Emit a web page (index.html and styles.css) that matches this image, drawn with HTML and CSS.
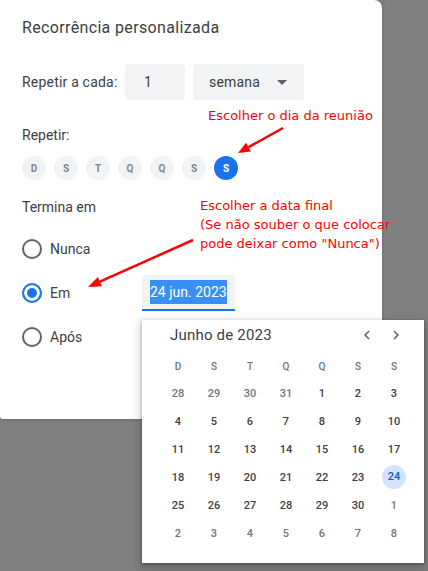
FILE: index.html
```html
<!DOCTYPE html>
<html lang="pt">

<head>
    <title>Recorrência personalizada</title>
    <link rel="stylesheet" href="styles.css">
</head>

<body>
    <div class="dialog">
        <h1 class="title">Recorrência personalizada</h1>

        <div class="repeat-row">
            <span class="label every">Repetir a cada:</span>
            <div class="field num">1</div>
            <div class="field select">semana <span class="caret"></span></div>
        </div>

        <p class="label repeat-label">Repetir:</p>
        <div class="days">
            <span class="day">D</span>
            <span class="day">S</span>
            <span class="day">T</span>
            <span class="day">Q</span>
            <span class="day">Q</span>
            <span class="day">S</span>
            <span class="day on">S</span>
        </div>

        <p class="label ends-label">Termina em</p>
        <div class="options">
            <div class="option">
                <span class="radio"></span>
                <span class="label">Nunca</span>
            </div>
            <div class="option">
                <span class="radio checked"></span>
                <span class="label">Em</span>
                <div class="date"><span class="sel">24 jun. 2023</span></div>
            </div>
            <div class="option">
                <span class="radio"></span>
                <span class="label">Após</span>
            </div>
        </div>
    </div>

    <!-- calendar popup over the dialog -->
    <div class="picker">
        <div class="picker-head">
            <span class="month">Junho de 2023</span>
            <span class="nav">
                <svg width="18" height="18" viewBox="0 0 24 24"><path d="M15.41 7.41L14 6l-6 6 6 6 1.41-1.41L10.83 12z" fill="#5f6368"/></svg>
            </span>
            <span class="nav">
                <svg width="18" height="18" viewBox="0 0 24 24"><path d="M8.59 16.59L10 18l6-6-6-6-1.41 1.41L13.17 12z" fill="#5f6368"/></svg>
            </span>
        </div>
        <div class="weekdays">
            <span>D</span><span>S</span><span>T</span><span>Q</span><span>Q</span><span>S</span><span>S</span>
        </div>
        <div class="dates">
            <span class="out">28</span><span class="out">29</span><span class="out">30</span><span class="out">31</span><span>1</span><span>2</span><span>3</span>
            <span>4</span><span>5</span><span>6</span><span>7</span><span>8</span><span>9</span><span>10</span>
            <span>11</span><span>12</span><span>13</span><span>14</span><span>15</span><span>16</span><span>17</span>
            <span>18</span><span>19</span><span>20</span><span>21</span><span>22</span><span>23</span><span class="picked"><b>24</b></span>
            <span>25</span><span>26</span><span>27</span><span>28</span><span>29</span><span>30</span><span class="out">1</span>
            <span class="out">2</span><span class="out">3</span><span class="out">4</span><span class="out">5</span><span class="out">6</span><span class="out">7</span><span class="out">8</span>
        </div>
    </div>

    <!-- red annotations -->
    <div class="note note-day">Escolher o dia da reunião</div>
    <div class="note note-end">Escolher a data final<br>(Se não souber o que colocar<br>pode deixar como "Nunca")</div>
    <svg class="arrows" width="428" height="571" viewBox="0 0 428 571">
        <line x1="283" y1="128" x2="248.5" y2="147.2" stroke="#ff0000" stroke-width="2.5"/>
        <polygon points="238,153 250.9,151.6 246.1,142.8" fill="#ff0000"/>
        <line x1="193" y1="240" x2="99.9" y2="281.7" stroke="#ff0000" stroke-width="2.5"/>
        <polygon points="88,287 101.9,286.3 97.9,277.1" fill="#ff0000"/>
    </svg>
</body>

</html>
```

FILE: styles.css
```css
body {
    margin: 0;
    width: 428px;
    height: 571px;
    overflow: hidden;
    background-color: #808080;
    font-family: Roboto, "Liberation Sans", sans-serif;
    color: #3c4043;
    position: relative;
}

.dialog {
    width: 382px;
    height: 419px;
    box-sizing: border-box;
    padding: 16px 22px 0;
    background-color: #fff;
    border-radius: 0 8px 8px 3px;
    box-shadow: 0 0 4px rgba(0, 0, 0, 0.2);
}

.title {
    margin: 0;
    font-size: 16px;
    font-weight: 400;
    line-height: 24px;
    letter-spacing: 0.35px;
}

.label {
    font-size: 14px;
    line-height: 20px;
}

.repeat-row {
    display: flex;
    align-items: center;
    gap: 8px;
    margin-top: 24px;
}

.every {
    width: 95px;
    flex-shrink: 0;
    white-space: nowrap;
    letter-spacing: 0.2px;
}

.field {
    height: 36px;
    box-sizing: border-box;
    flex-shrink: 0;
    display: flex;
    align-items: center;
    background-color: #f1f3f4;
    border-radius: 4px;
    font-size: 14px;
}

.num {
    width: 60px;
    padding-left: 19px;
}

.select {
    width: 111px;
    padding: 0 17px 0 16px;
    justify-content: space-between;
    letter-spacing: 0.2px;
}

.caret {
    width: 0;
    height: 0;
    border-left: 5px solid transparent;
    border-right: 5px solid transparent;
    border-top: 5px solid #5f6368;
}

.repeat-label {
    margin: 25px 0 0;
}

.days {
    display: flex;
    gap: 8px;
    margin-top: 11px;
}

.day {
    width: 24px;
    height: 24px;
    border-radius: 50%;
    background-color: #f1f3f4;
    color: #80868b;
    font-size: 10px;
    font-weight: 700;
    display: flex;
    align-items: center;
    justify-content: center;
}

.day.on {
    background-color: #1a73e8;
    color: #fff;
}

.ends-label {
    margin: 17px 0 0;
}

.options {
    margin-top: 10px;
}

.option {
    height: 44px;
    display: grid;
    grid-template-columns: 20px 84px auto;
    align-items: center;
    column-gap: 8px;
}

.radio {
    width: 20px;
    height: 20px;
    box-sizing: border-box;
    border: 2px solid #5f6368;
    border-radius: 50%;
}

.radio.checked {
    border-color: #1a73e8;
    background-color: #1a73e8;
    box-shadow: inset 0 0 0 3px #fff;
}

.date {
    width: 93px;
    height: 36px;
    box-sizing: border-box;
    padding-left: 8px;
    display: flex;
    align-items: center;
    background-color: #f1f3f4;
    border-radius: 4px 4px 0 0;
    border-bottom: 2px solid #1a73e8;
    font-size: 14px;
}

.sel {
    background-color: #3a8ff7;
    color: #fff;
    line-height: 24px;
}

.picker {
    position: absolute;
    left: 142px;
    top: 320px;
    width: 282px;
    height: 243px;
    box-sizing: border-box;
    padding: 0 12px 0 18px;
    background-color: #fff;
    box-shadow: 0 1px 3px rgba(0, 0, 0, 0.3), 0 4px 8px 3px rgba(0, 0, 0, 0.15);
}

.picker-head {
    height: 30px;
    display: flex;
    align-items: center;
    margin-right: 4px;
}

.month {
    flex: 1;
    padding-left: 10px;
    font-size: 15px;
    letter-spacing: 0.2px;
}

.nav {
    width: 24px;
    height: 24px;
    margin-left: 5px;
    display: flex;
    align-items: center;
    justify-content: center;
}

.weekdays,
.dates {
    display: grid;
    grid-template-columns: repeat(7, 36px);
    font-size: 11px;
    font-weight: 500;
}

.weekdays {
    height: 26px;
    margin-top: 3px;
    align-items: center;
    color: #70757a;
    font-size: 10px;
}

.weekdays span,
.dates span {
    text-align: center;
}

.dates {
    grid-auto-rows: 28px;
    align-items: center;
}

.dates .out {
    color: #70757a;
}

.dates .picked b {
    display: inline-block;
    width: 24px;
    height: 24px;
    line-height: 24px;
    border-radius: 50%;
    background-color: #d2e3fc;
    color: #185abc;
    font-weight: 500;
}

.note {
    position: absolute;
    color: #ff0000;
    font-family: "DejaVu Sans", Verdana, sans-serif;
    font-size: 13px;
    line-height: 19px;
    white-space: nowrap;
}

.note-day {
    left: 208px;
    top: 106px;
}

.note-end {
    left: 200px;
    top: 196px;
}

.arrows {
    position: absolute;
    left: 0;
    top: 0;
    pointer-events: none;
}
```
